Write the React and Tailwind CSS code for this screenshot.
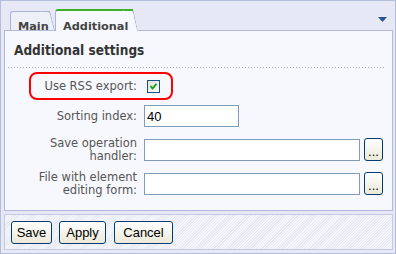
import React from "react";

function Checkbox() {
  return (
    <svg width="13" height="13" viewBox="0 0 13 13" className="block">
      <defs>
        <linearGradient id="cbg" x1="0" y1="0" x2="1" y2="1">
          <stop offset="0" stopColor="#dcdcd7" />
          <stop offset="1" stopColor="#ffffff" />
        </linearGradient>
      </defs>
      <rect x="0.5" y="0.5" width="12" height="12" fill="url(#cbg)" stroke="#1c5180" />
      <path d="M3.5 6 L5.5 8.5 L9.5 3.8" fill="none" stroke="#21a121" strokeWidth="2" />
    </svg>
  );
}

function XpButton({ children, className = "" }) {
  return (
    <button
      className={`h-[23px] border border-[#003c74] rounded-[3px] bg-linear-to-b from-white to-[#ece9d8] text-[13px] text-black font-['Liberation_Sans',sans-serif] leading-none ${className}`}
    >
      {children}
    </button>
  );
}

export default function App() {
  return (
    <div className="w-[396px] h-[254px] border border-[#b4bedb] bg-[#e6e9f5] flex flex-col font-['DejaVu_Sans',sans-serif]">
      {/* tab strip */}
      <div className="relative h-[29px] flex items-end pl-[9px] shrink-0">
        <div className="relative h-[19px] w-[40px] border-l border-t border-[#a9b4d6] rounded-tl-[3px] bg-[#eef0f8] pl-[7px] pt-px">
          <div className="absolute top-[-1px] bottom-0 right-[-5px] w-[10px] border-t border-r border-[#a9b4d6] rounded-tr-[3px] bg-[#eef0f8] origin-bottom skew-x-[14deg]" />
          <span className="relative text-[11.3px] leading-[13px] font-bold text-[#444]">Main</span>
        </div>
        <div className="relative z-10 -mb-px ml-[5px] h-[22px] w-[78px] border-l border-t-2 border-l-[#a9b4d6] border-t-[#3fae29] rounded-tl-[3px] bg-[#f7f8fd] pl-[7px] pt-[2px]">
          <div className="absolute top-[-2px] bottom-0 right-[-5px] w-[10px] border-t-2 border-r border-t-[#3fae29] border-r-[#a9b4d6] rounded-tr-[3px] bg-[#f7f8fd] origin-bottom skew-x-[12deg]" />
          <span className="relative text-[11.3px] leading-[13px] font-bold text-[#444]">Additional</span>
        </div>
        <svg width="9" height="5" viewBox="0 0 9 5" className="absolute right-[8px] top-[16px]">
          <polygon points="0,0 9,0 4.5,5" fill="#27568f" />
        </svg>
      </div>

      {/* panel */}
      <div className="ml-[3px] w-[389px] h-[181px] shrink-0 border border-[#b1bbd9] bg-[#f7f8fd] pt-[11px]">
        <h2 className="pl-[9px] text-[13.5px] leading-[16px] font-bold text-[#333] font-['DejaVu_Sans_Condensed','DejaVu_Sans',sans-serif]">
          Additional settings
        </h2>
        <div className="mt-[9px] ml-[3px] w-[378px] h-px bg-[repeating-linear-gradient(to_right,#a3abc4_0,#a3abc4_1px,transparent_1px,transparent_3px)]" />

        <div className="text-[11.5px] leading-[13px] text-[#555]">
          <div className="relative mt-[8px] h-[20px] flex items-center">
            <div className="absolute left-[24px] top-[-4px] w-[144px] h-[28px] border-2 border-[#ff0000] rounded-[8px]" />
            <div className="w-[132px] text-right">Use RSS export:</div>
            <div className="ml-[10px]">
              <Checkbox />
            </div>
          </div>

          <div className="mt-[9px] h-[22px] flex items-center">
            <div className="w-[132px] text-right">Sorting index:</div>
            <div className="ml-[7px] w-[95px] h-[22px] border border-[#7f9db9] bg-white pl-[2px] flex items-center font-['Liberation_Sans',sans-serif] text-[13px] text-black">
              40
            </div>
          </div>

          <div className="mt-[11px] h-[23px] flex items-center">
            <div className="w-[132px] text-right">
              Save operation
              <br />
              handler:
            </div>
            <div className="ml-[7px] w-[216px] h-[22px] border border-[#7f9db9] bg-white" />
            <XpButton className="ml-[4px] w-[19px] text-[11px] pt-[4px]">...</XpButton>
          </div>

          <div className="mt-[11px] h-[23px] flex items-center">
            <div className="w-[132px] text-right">
              File with element
              <br />
              editing form:
            </div>
            <div className="ml-[7px] w-[216px] h-[22px] border border-[#7f9db9] bg-white" />
            <XpButton className="ml-[4px] w-[19px] text-[11px] pt-[4px]">...</XpButton>
          </div>
        </div>
      </div>

      {/* footer */}
      <div className="ml-[3px] mt-[3px] w-[389px] h-[36px] shrink-0 border border-[#c3cbe2] bg-[repeating-linear-gradient(135deg,#f6f7fb_0,#f6f7fb_1px,#e7eaf2_1px,#e7eaf2_2px)] flex items-start pl-[6px] pt-[6px]">
        <XpButton className="w-[41px]">Save</XpButton>
        <XpButton className="ml-[7px] w-[47px]">Apply</XpButton>
        <XpButton className="ml-[8px] w-[59px]">Cancel</XpButton>
      </div>
    </div>
  );
}
